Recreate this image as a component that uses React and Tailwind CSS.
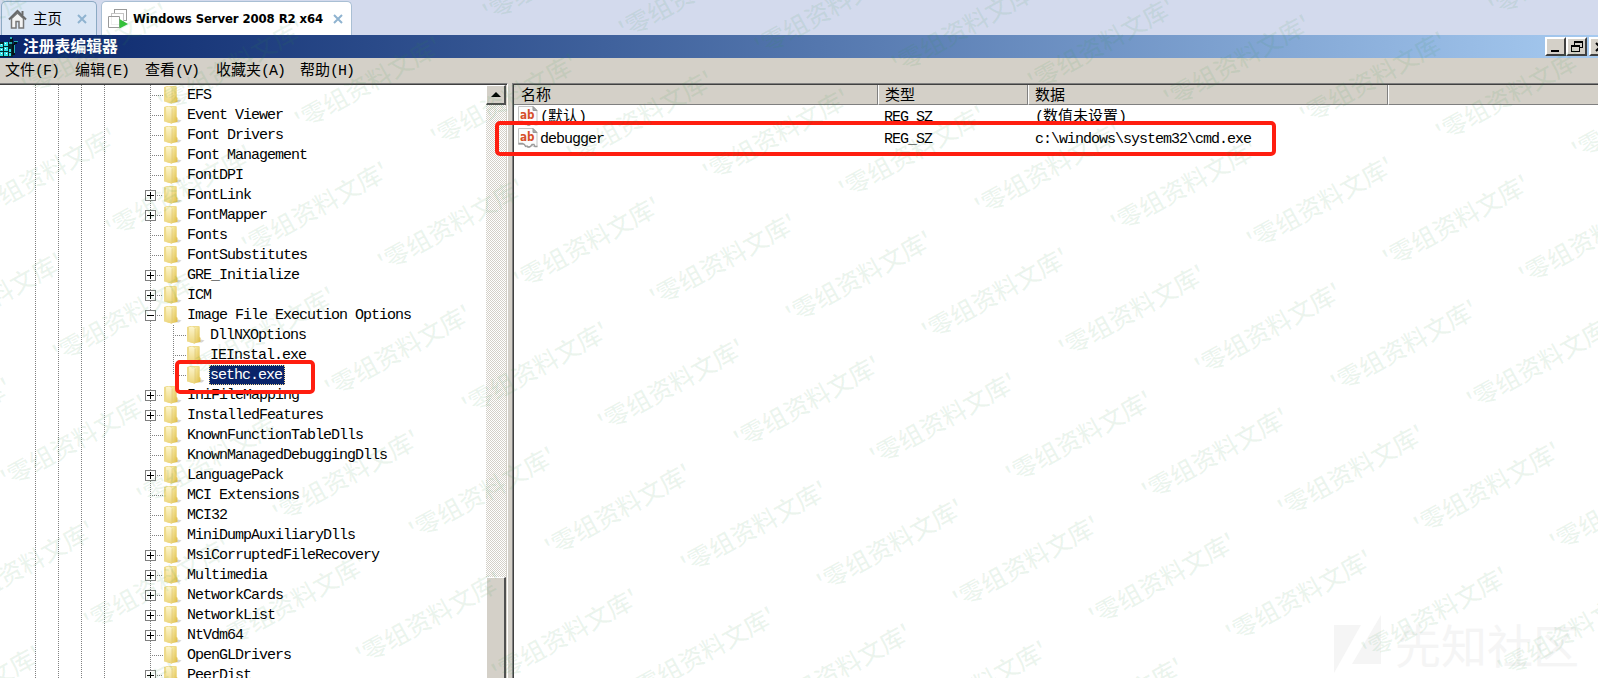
import React from "react";

const MONO = "font-['Liberation_Mono','Noto_Sans_CJK_SC',monospace]";
const VDOTS = "bg-[repeating-linear-gradient(to_bottom,#808080_0px,#808080_1px,transparent_1px,transparent_2px)]";
const HDOTS = "bg-[repeating-linear-gradient(to_right,#808080_0px,#808080_1px,transparent_1px,transparent_2px)]";

const ROWS = [
  ["EFS"], ["Event Viewer"], ["Font Drivers"], ["Font Management"], ["FontDPI"],
  ["FontLink", "+"], ["FontMapper", "+"], ["Fonts"], ["FontSubstitutes"],
  ["GRE_Initialize", "+"], ["ICM", "+"], ["Image File Execution Options", "-"],
  ["DllNXOptions", "child"], ["IEInstal.exe", "child"], ["sethc.exe", "last"],
  ["IniFileMapping", "+"], ["InstalledFeatures", "+"], ["KnownFunctionTableDlls"],
  ["KnownManagedDebuggingDlls"], ["LanguagePack", "+"], ["MCI Extensions"], ["MCI32"],
  ["MiniDumpAuxiliaryDlls"], ["MsiCorruptedFileRecovery", "+"], ["Multimedia", "+"],
  ["NetworkCards", "+"], ["NetworkList", "+"], ["NtVdm64", "+"], ["OpenGLDrivers"], ["PeerDist", "+"],
];

/* Mixed text: Latin cells are 8px wide, Han cells 15px. */
function T({ children, className = "pt-px" }) {
  const parts = children.match(/[\u4e00-\u9fff]+|[^\u4e00-\u9fff]+/g);
  return (
    <span className={`${MONO} inline-flex items-baseline leading-5 whitespace-pre ${className}`}>
      {parts.map((p, i) =>
        /[\u4e00-\u9fff]/.test(p) ? (
          <span key={i} className="font-['Noto_Sans_CJK_SC',sans-serif] text-[15px]">{p}</span>
        ) : (
          <span key={i} className="text-[15px] tracking-[-1px]">{p}</span>
        )
      )}
    </span>
  );
}

function Folder() {
  return (
    <svg className="h-5 w-[18px] shrink-0" viewBox="0 0 18 20">
      <defs>
        <linearGradient id="fb" x1="0" x2="0" y1="0" y2="1">
          <stop offset="0" stopColor="#fdf6cf" />
          <stop offset="1" stopColor="#ecd579" />
        </linearGradient>
        <linearGradient id="ff" x1="0" x2="1" y1="0" y2="1">
          <stop offset="0" stopColor="#f9edab" />
          <stop offset="1" stopColor="#dcb93f" />
        </linearGradient>
      </defs>
      <path d="M11 17.500l3-3 3.500 1-2.500 2z" fill="#c4c4c4" opacity=".7" />
      <path d="M0 2L3 1h9.500v16l-5 1.500L0 16.500z" fill="#eedb8c" />
      <path d="M8 2h4.500v10l1 .8v4l-5.500 1.200z" fill="url(#ff)" />
      <path d="M2 2.200L5 1.500 8 3v15.700L2.500 16.900z" fill="url(#fb)" />
      <path d="M8 3.500v14" stroke="#d9c070" strokeWidth=".6" />
    </svg>
  );
}

function Toggle({ kind }) {
  return (
    <div className="ml-10 flex w-[11px] flex-col items-center">
      <div className={`h-[5px] w-px ${VDOTS}`} />
      <svg className="h-[11px] w-[11px]" viewBox="0 0 11 11" shapeRendering="crispEdges">
        <rect x=".5" y=".5" width="10" height="10" fill="#fff" stroke="#808080" />
        <path d={kind === "+" ? "M2 5.500h7M5.500 2v7" : "M2 5.500h7"} stroke="#000" />
      </svg>
      <div className={`h-[4px] w-px ${VDOTS}`} />
    </div>
  );
}

function Row({ label, kind }) {
  const child = kind === "child" || kind === "last";
  const box = kind === "+" || kind === "-";
  return (
    <div className="flex h-5 shrink-0 items-stretch">
      <div className={`ml-[35px] w-px ${VDOTS}`} />
      <div className={`ml-[22px] w-px ${VDOTS}`} />
      <div className={`ml-[22px] w-px ${VDOTS}`} />
      <div className={`ml-[22px] w-px ${VDOTS}`} />
      {box ? <Toggle kind={kind} /> : <div className={`ml-[45px] w-px ${VDOTS}`} />}
      {child && (
        <div className={`ml-[22px] w-px ${VDOTS} ${kind === "last" ? "h-[10px]" : ""}`} />
      )}
      <div className={`mt-[10px] mr-px ml-px h-px ${HDOTS} ${box ? "w-[6px]" : "w-[11px]"}`} />
      <Folder />
      {kind === "last" ? (
        <div className="ml-[4px] flex h-5 w-[76px] items-center border border-dotted border-[#f5db95] bg-[#0a246a]">
          <T className="pt-px text-white">{label}</T>
        </div>
      ) : (
        <T className="ml-[5px] pt-px text-black">{label}</T>
      )}
    </div>
  );
}

function StringIcon() {
  return (
    <svg className="h-5 w-5 shrink-0" viewBox="0 0 20 20">
      <path d="M.5.500h14.500l4 4v14h-3l-2-1-2 2h-3l-3-3H.5z" fill="#fcfcfc" stroke="#c4c4c4" />
      <path d="M15 .5v4h4z" fill="#aaa" stroke="#999" />
      <path d="M.5 15.500h4l2 1 1 2 1.500-.500 1.500 1 2-.500 1.500-2h2l1 2h2.500" fill="none" stroke="#9a9a9a" strokeWidth="1.300" />
      <text x="2" y="12.500" fontFamily="DejaVu Sans" fontWeight="bold" fontSize="12" textLength="14.500" lengthAdjust="spacingAndGlyphs" fill="#d6502b">ab</text>
    </svg>
  );
}

function WinButton({ children, className = "" }) {
  return (
    <div className={`flex h-[19px] w-[21px] shrink-0 items-center justify-center border-2 border-t-white border-r-[#404040] border-b-[#404040] border-l-white bg-[#d4d0c8] ${className}`}>
      {children}
    </div>
  );
}

function HeaderCell({ children, className }) {
  return (
    <div className={`flex h-5 shrink-0 items-end border-b border-b-[#808080] bg-[#d4d0c8] ${className}`}>
      <T>{children}</T>
    </div>
  );
}

/* The Han face has a taller ascent, so rows containing it start higher. */
function Value({ name, type, data, han }) {
  return (
    <div className="flex h-[22px] shrink-0 pt-px">
      <div className="flex w-[366px] gap-[2px] pl-1">
        <StringIcon />
        <T className={han ? "-mt-px" : "pt-[2px]"}>{name}</T>
      </div>
      <T className="w-[151px] pt-[2px] pl-[4px]">{type}</T>
      <T className={`pl-[4px] ${han ? "-mt-px" : "pt-[2px]"}`}>{data}</T>
    </div>
  );
}

const MARKS = [];
for (let m = -2; m <= 6; m++)
  for (let n = -6; n <= 14; n++) {
    const x = 295.5 + 136.1 * n - 52.6 * m;
    const y = 114 + 17.2 * n + 125.2 * m;
    if (x > -140 && x < 1598 && y > 0 && y < 750) MARKS.push([x, y]);
  }

export default function App() {
  return (
    <div className="relative flex h-[678px] w-[1598px] flex-col overflow-hidden bg-white text-black">
      <div className="flex h-[35px] shrink-0 items-end bg-[#d3daed] pl-px">
        <div className="flex h-[34px] w-[96px] items-center rounded-t-[5px] border border-b-0 border-[#8caac4] bg-[#dbe7f5] pl-[6px]">
          <svg className="h-5 w-[19px]" viewBox="0 0 19 20">
            <path d="M3.500 9.500v9.500h4.500v-6.500h3v6.500h4.500V9.500L9.500 4z" fill="#f4f4f4" stroke="#777" strokeWidth="1.500" />
            <path d="M1 10.500L9.500 2 18 10.500" fill="none" stroke="#6a6a6a" strokeWidth="2" />
            <path d="M14.500 2v4" stroke="#6a6a6a" strokeWidth="2" />
          </svg>
          <span className="ml-[6px] -translate-y-[1.5px] font-['Noto_Sans_CJK_SC',sans-serif] text-[14.5px] leading-5">主页</span>
          <svg className="ml-[15px] h-[10px] w-[10px]" viewBox="0 0 10 10">
            <path d="M1 1l8 8M9 1L1 9" stroke="#8fb3d0" strokeWidth="2" />
          </svg>
        </div>
        <div className="ml-[4px] flex h-[34px] w-[251px] items-center rounded-t-[5px] border border-b-0 border-[#a9bfd4] bg-white pl-[6px]">
          <svg className="h-5 w-5" viewBox="0 0 20 20">
            <rect x="6.500" y=".5" width="12" height="11" fill="#fff" stroke="#9a9a9a" />
            <rect x="3.500" y="4.500" width="12" height="11" fill="#fff" stroke="#c4c4c4" />
            <path d="M.5 7.500h11v11H.5z" fill="#fff" fillOpacity=".7" stroke="#9a9a9a" />
            <path d="M11.500 10l8.500 5-8.500 4.500z" fill="#35c33a" />
          </svg>
          <span className="ml-[5px] w-[190px] whitespace-nowrap font-['DejaVu_Sans_Condensed','DejaVu_Sans',sans-serif] text-[13px] font-bold tracking-[-0.1px]">Windows Server 2008 R2 x64</span>
          <svg className="ml-[10px] h-[10px] w-[10px]" viewBox="0 0 10 10">
            <path d="M1 1l8 8M9 1L1 9" stroke="#8fb3d0" strokeWidth="2" />
          </svg>
        </div>
      </div>

      <div className="flex h-[23px] shrink-0 items-center overflow-hidden bg-gradient-to-r from-[#0a246a] to-[#a6caf0]">
        <svg className="h-[20px] w-[18px] shrink-0" viewBox="0 0 18 20" shapeRendering="crispEdges">
          <path d="M0 5h13v15H0z" fill="#06282e" />
          <path d="M0 7h3v3H0zM4 5h4v4H4zM0 11h3v3H0zM4 10h4v4H4zM0 15h3v4H0zM4 15h4v4H4zM9 12h2v3H9zM9 16h2v3H9z" fill="#2fe0e6" />
          <path d="M1 7h1v1H1zM5 6h1v1H5zM1 12h1v1H1zM5 11h1v1H5zM1 16h1v1H1zM6 16h1v1H6z" fill="#fff" />
          <path d="M10 1h3v4h-3zM14 4h3v3h-3zM12 7h3v11h-3z" fill="#031418" />
          <path d="M10 0h2v2h-2zM14 4h4v1h-4zM9 5h3v2H9zM14 8h1v8h-1z" fill="#26aeb5" />
        </svg>
        <span className="ml-[5px] -translate-y-px font-['Noto_Sans_CJK_SC',sans-serif] text-[15.8px] leading-5 font-bold text-white">注册表编辑器</span>
        <div className="ml-auto flex w-[53px] shrink-0">
          <WinButton>
            <div className="mt-[9px] mr-px h-[2px] w-2 bg-black" />
          </WinButton>
          <WinButton>
            <svg className="h-3 w-3" viewBox="0 0 12 12" shapeRendering="crispEdges">
              <path d="M3 0h9v7H9V6h2V2H4v2H3z" fill="#000" />
              <path d="M0 4h9v7H0zM1 6v4h7V6z" fill="#000" fillRule="evenodd" />
            </svg>
          </WinButton>
          <WinButton className="ml-[2px]">
            <svg className="h-[10px] w-[10px] shrink-0" viewBox="0 0 10 10">
              <path d="M1 1l8 8M9 1L1 9" stroke="#000" strokeWidth="2" />
            </svg>
          </WinButton>
        </div>
      </div>

      <div className="flex h-[25px] shrink-0 items-center bg-[#d4d0c8] pl-[5px]">
        <T className="w-[70px]">文件(F)</T>
        <T className="w-[70px]">编辑(E)</T>
        <T className="w-[71px]">查看(V)</T>
        <T className="w-[84px]">收藏夹(A)</T>
        <T className="">帮助(H)</T>
      </div>

      <div className="flex min-h-0 flex-1 bg-[#d4d0c8]">
        <div className="flex w-[508px] flex-col overflow-hidden border-t border-r border-t-[#808080] border-r-white">
          <div className="flex min-h-0 flex-1 border-t border-t-[#404040]">
            <div className="flex w-[486px] flex-col overflow-hidden bg-white">
              {ROWS.map(([label, kind]) => (
                <Row key={label} label={label} kind={kind} />
              ))}
            </div>
            <div className="flex w-5 flex-col bg-[repeating-conic-gradient(#d4d0c8_0%_25%,#ffffff_0%_50%)] bg-size-[2px_2px]">
              <div className="flex h-5 items-center justify-center border-t border-r-2 border-b-2 border-l border-t-white border-r-[#505050] border-b-[#505050] border-l-white bg-[#d4d0c8]">
                <svg className="h-[5px] w-[10px]" viewBox="0 0 10 5">
                  <path d="M5 0l5 5H0z" fill="#000" />
                </svg>
              </div>
              <div className="mt-[472px] flex-1 border-t border-r-2 border-l border-t-white border-r-[#505050] border-l-white bg-[#d4d0c8]" />
            </div>
          </div>
        </div>
        <div className="ml-[4px] flex min-w-0 flex-1 flex-col border-t border-l border-[#808080]">
          <div className="flex min-h-0 flex-1 flex-col overflow-hidden border-t border-l border-[#404040] bg-white">
            <div className="flex">
              <HeaderCell className="w-[364px] border-r border-r-[#808080] pl-[7px]">名称</HeaderCell>
              <HeaderCell className="w-[150px] border-r border-l border-r-[#808080] border-l-white pl-[6px]">类型</HeaderCell>
              <HeaderCell className="w-[360px] border-r border-l border-r-[#808080] border-l-white pl-[6px]">数据</HeaderCell>
              <div className="h-5 flex-1 border-b border-l border-b-[#808080] border-l-white bg-[#d4d0c8]" />
            </div>
            <Value name="(默认)" type="REG_SZ" data="(数值未设置)" han />
            <Value name="debugger" type="REG_SZ" data="c:\windows\system32\cmd.exe" />
          </div>
        </div>
      </div>

      <div className="absolute top-[121px] left-[495px] h-[35px] w-[781px] rounded-[5px] border-4 border-[#ff1e10]" />
      <div className="absolute top-[360px] left-[175px] h-[34px] w-[140px] rounded-[5px] border-4 border-[#ff1e10]" />

      <svg className="absolute top-[615px] left-[1334px] h-[58px] w-[48px]" viewBox="0 0 48 58">
        <path d="M0 10h27L0 58zM47 0v49H18z" fill="#f5f5f5" />
      </svg>
      <div className="absolute top-[613px] left-[1395px] font-['Noto_Sans_CJK_SC',sans-serif] text-[46px] leading-[60px] whitespace-nowrap text-[#f5f5f5]">先知社区</div>

      <div className="pointer-events-none absolute inset-0 overflow-hidden">
        {MARKS.map(([x, y], i) => (
          <span
            key={i}
            className="absolute origin-left -rotate-[29deg] font-['Noto_Sans_CJK_SC',sans-serif] text-[24.7px] leading-[30px] font-medium whitespace-nowrap text-[#2f9440]/9"
            style={{ left: x, top: y - 8 }}
          >
            '零组资料文库'
          </span>
        ))}
      </div>
    </div>
  );
}
